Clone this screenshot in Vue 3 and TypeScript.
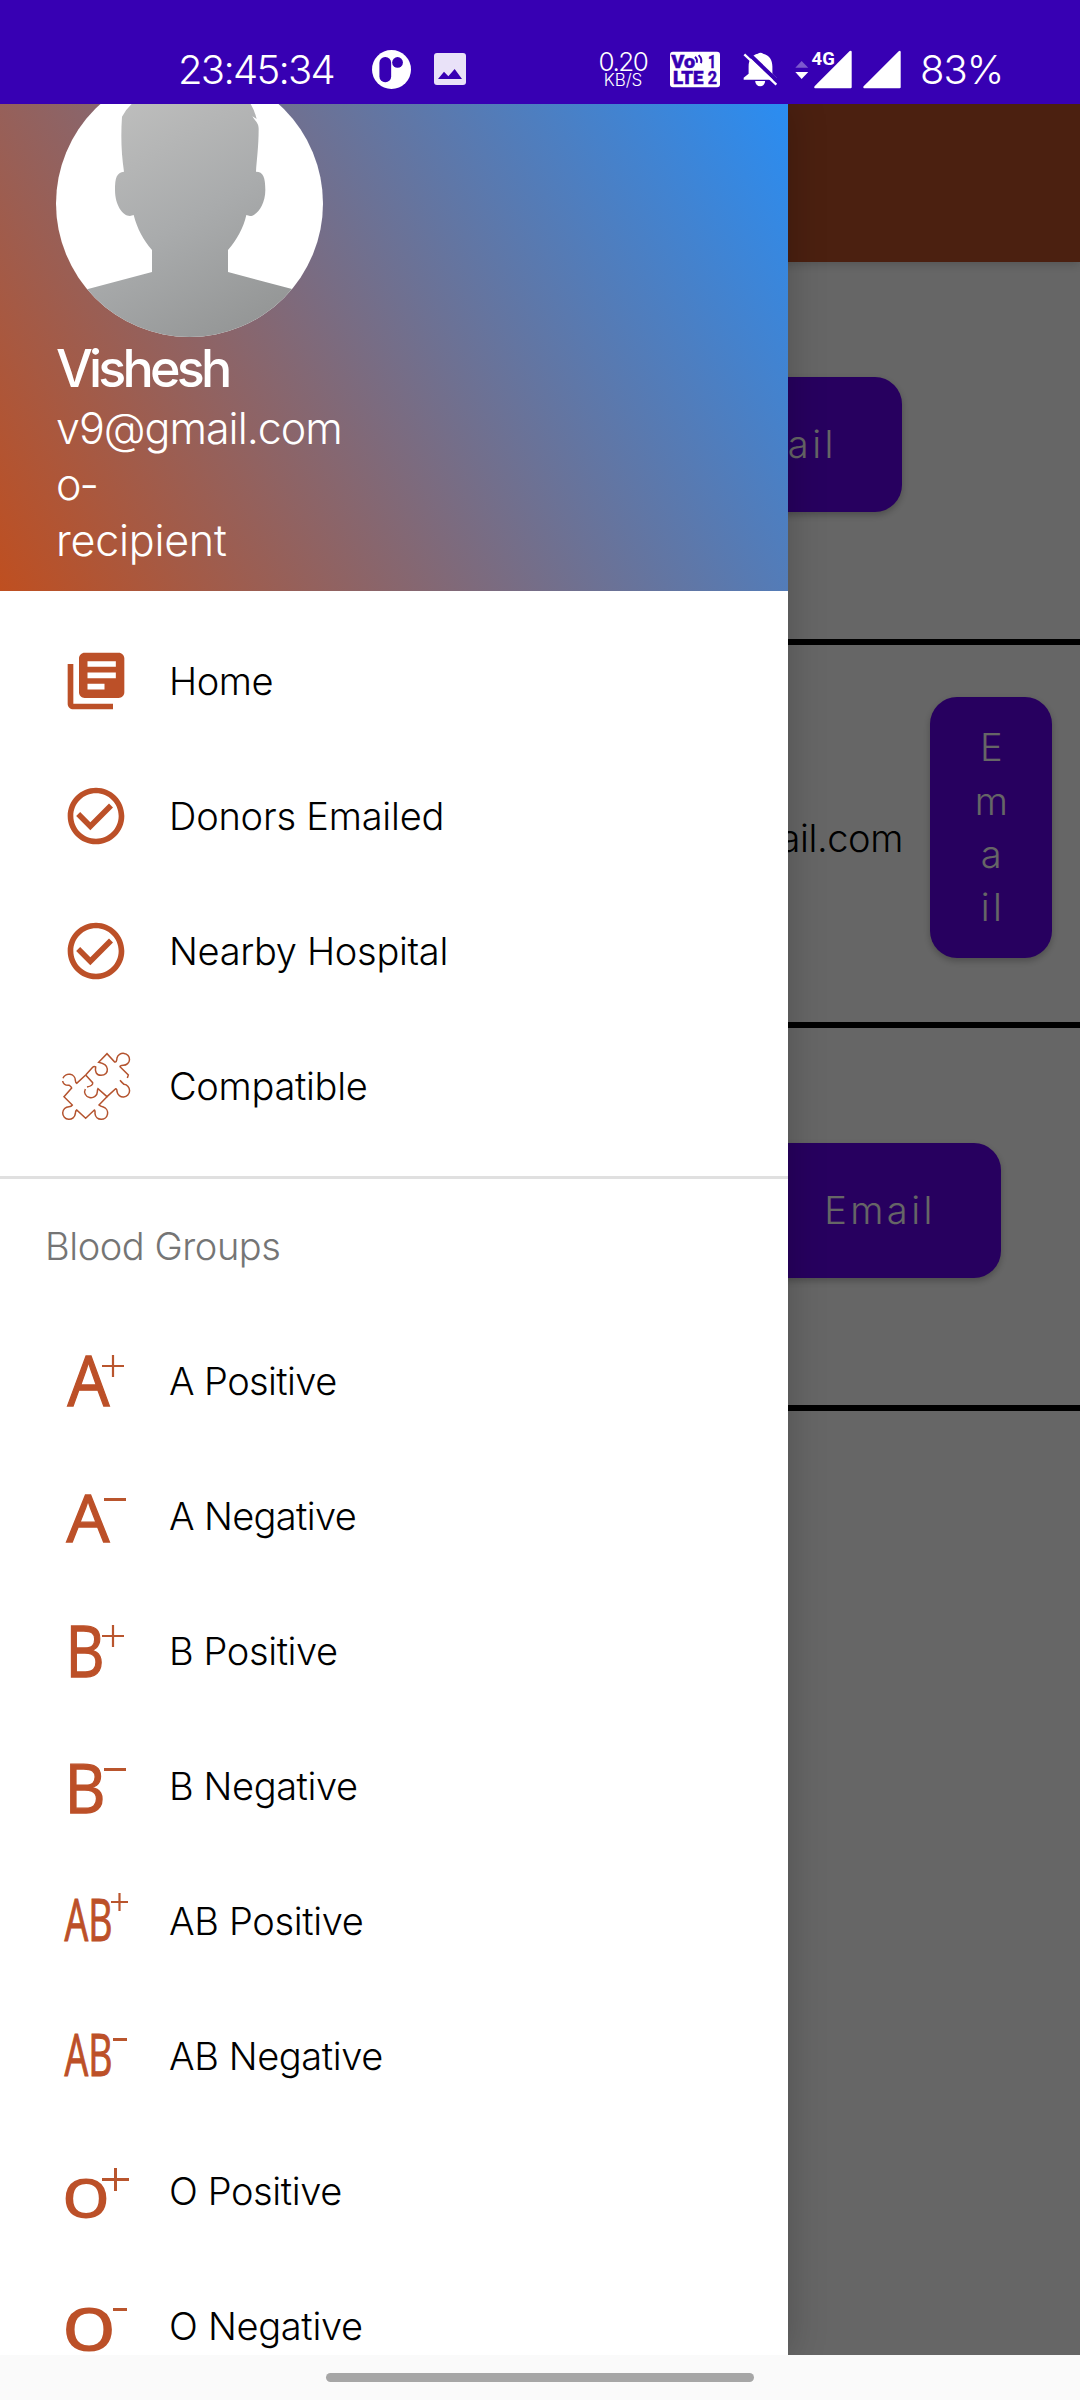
<script setup lang="ts">
interface NavItem {
  label: string
  icon: 'library' | 'check' | 'puzzle'
  spacing: number
}

interface BloodGroup {
  label: string
  spacing: number
  glyph: string
  x: number
  y: number
  size: number
  length: number
  weight: number
  outline: number
  sign: string
  stroke: number
}

const navItems: NavItem[] = [
  { label: 'Home', icon: 'library', spacing: -0.4 },
  { label: 'Donors Emailed', icon: 'check', spacing: -0.2 },
  { label: 'Nearby Hospital', icon: 'check', spacing: -0.3 },
  { label: 'Compatible', icon: 'puzzle', spacing: -0.3 },
]

const bloodGroups: BloodGroup[] = [
  { label: 'A Positive', spacing: -0.6, glyph: 'A', x: 5.5, y: 57.5, size: 70, length: 42, weight: 400, outline: 1.3, sign: 'M40 18H62M51 7V29', stroke: 2.2 },
  { label: 'A Negative', spacing: -0.65, glyph: 'A', x: 4.5, y: 58.5, size: 66, length: 43, weight: 400, outline: 1.3, sign: 'M42 16.5H64', stroke: 3 },
  { label: 'B Positive', spacing: -0.4, glyph: 'B', x: 3.5, y: 58.5, size: 71, length: 39, weight: 400, outline: 1.3, sign: 'M40 18H62M51 7V29', stroke: 2.2 },
  { label: 'B Negative', spacing: -0.4, glyph: 'B', x: 2.5, y: 59.5, size: 67, length: 41, weight: 400, outline: 1.3, sign: 'M42 16.5H64', stroke: 3 },
  { label: 'AB Positive', spacing: -0.35, glyph: 'AB', x: 2.5, y: 53, size: 58, length: 48, weight: 400, outline: 1, sign: 'M49 14H66M57.5 5V23', stroke: 2.2 },
  { label: 'AB Negative', spacing: -0.4, glyph: 'AB', x: 2.5, y: 53, size: 58, length: 48, weight: 400, outline: 1, sign: 'M51 16.5H65', stroke: 3 },
  { label: 'O Positive', spacing: -0.4, glyph: 'O', x: 0, y: 59.5, size: 55, length: 48, weight: 600, outline: 0, sign: 'M40 21.5H67M53.5 10V33', stroke: 3 },
  { label: 'O Negative', spacing: -0.3, glyph: 'O', x: 0, y: 57.5, size: 59, length: 54, weight: 600, outline: 0, sign: 'M51 16.5H65', stroke: 3 },
]
</script>

<template>
  <div class="screen">
    <header class="status">
      <span class="clock">23:45:34</span>
      <svg class="ic-app" viewBox="665 59 116 116">
        <circle cx="723" cy="117" r="58" fill="#fff" />
        <rect x="687" y="80" width="35" height="75" rx="17" fill="#3700b3" />
        <circle cx="741" cy="96" r="16" fill="#3700b3" />
      </svg>
      <svg class="ic-image" viewBox="852 69 96 96">
        <rect x="852" y="69" width="96" height="96" rx="9" fill="#e9e2f8" />
        <path d="M864 147L882 125L895 139L914 117L936 147Z" fill="#3700b3" />
      </svg>
      <div class="net">
        <span class="net-num">0.20</span>
        <span class="net-unit">KB/S</span>
      </div>
      <svg class="ic-volte" viewBox="270 62 150 110">
        <rect x="270" y="64" width="150" height="106" rx="9" fill="#fff" />
        <g fill="#3700b3" stroke="#3700b3" stroke-width="1.5" font-family="Roboto, sans-serif" font-weight="900">
          <text x="274" y="112" font-size="53" textLength="71" lengthAdjust="spacingAndGlyphs">Vo</text>
          <text x="279" y="160" font-size="53" textLength="91" lengthAdjust="spacingAndGlyphs">LTE</text>
          <text x="384" y="112" font-size="53" font-weight="700" textLength="24" lengthAdjust="spacingAndGlyphs">1</text>
          <text x="383" y="160" font-size="53" font-weight="700" textLength="28" lengthAdjust="spacingAndGlyphs">2</text>
        </g>
        <path d="M345 79Q353 86 350 97M356 74Q367 85 363 98" fill="none" stroke="#3700b3" stroke-width="6" />
      </svg>
      <svg class="ic-bell" viewBox="489 66 104 106">
        <path d="M490 150V144L505 132V110C505 88 516 74 533 71C537 67 545 67 549 71C568 75 577 90 577 110V132L590 145V150Z" fill="#fff" />
        <path d="M525 154H555A15 16 0 0 1 525 154Z" fill="#fff" />
        <path d="M500 66L602 164" stroke="#3700b3" stroke-width="12" />
        <path d="M492 73L589 165" stroke="#fff" stroke-width="7" />
      </svg>
      <svg class="ic-4g" viewBox="644 58 172 117">
        <path d="M645 111L664 91L684 111Z" fill="#fff" opacity=".35" />
        <path d="M645 124H684L664 145Z" fill="#fff" />
        <path d="M704 173Q700 171 703 167L809 61Q815 58 815 64V170Q815 173 812 173Z" fill="#fff" />
        <text x="694" y="102" font-size="53" font-weight="700" font-family="Roboto, sans-serif" fill="#fff" textLength="70" lengthAdjust="spacingAndGlyphs">4G</text>
      </svg>
      <svg class="ic-signal" viewBox="848 58 115 117">
        <path d="M851 173Q847 171 850 167L956 61Q962 58 962 64V170Q962 173 959 173Z" fill="#fff" />
      </svg>
      <span class="battery">83%</span>
    </header>

    <div class="body">
      <main class="page">
        <div class="appbar"></div>
        <section class="donor first"><button class="email-btn">Email</button></section>
        <section class="donor second">
          <span class="address">v9@gmail.com</span>
          <button class="email-btn narrow">
            <span>E</span><span>m</span><span>a</span><span>il</span>
          </button>
        </section>
        <section class="donor third"><button class="email-btn">Email</button></section>
      </main>
      <div class="scrim"></div>

      <aside class="drawer">
        <div class="profile">
          <svg class="avatar" viewBox="168 -60 801 801">
            <defs>
              <linearGradient id="skin" gradientUnits="userSpaceOnUse" x1="330" y1="0" x2="740" y2="720">
                <stop offset="0" stop-color="#c0c0bf" />
                <stop offset=".55" stop-color="#a9abac" />
                <stop offset="1" stop-color="#949696" />
              </linearGradient>
              <clipPath id="round"><circle cx="568.5" cy="340.5" r="400.5" /></clipPath>
            </defs>
            <g clip-path="url(#round)">
              <rect x="168" y="-60" width="801" height="801" fill="#fff" />
              <path
                fill="url(#skin)"
                d="M366 80Q376 60 395 42L430 -20H720L752 42Q764 62 770 87L757 79C766 94 776 99 776 116C776 170 770 210 768 245C790 245 796 262 796 300C796 345 770 378 750 378L739 375C730 415 710 450 684 480V546L876 597L969 622V760H168V622L264 597L456 546V480C430 450 412 418 401 375L390 378C368 378 345 345 345 300C345 262 350 248 372 245C364 190 362 140 366 80Z"
              />
            </g>
          </svg>
          <div class="name">Vishesh</div>
          <div class="detail mail">v9@gmail.com</div>
          <div class="detail group">o-</div>
          <div class="detail role">recipient</div>
        </div>

        <nav class="menu">
          <a v-for="item in navItems" :key="item.label" class="row">
            <svg v-if="item.icon === 'library'" class="icon" viewBox="0 0 24 24">
              <path d="M4 6H2v14c0 1.1.9 2 2 2h14v-2H4V6zm16-4H8c-1.100 0-2 .9-2 2v12c0 1.100.9 2 2 2h12c1.100 0 2-.9 2-2V4c0-1.100-.9-2-2-2zm-1 9H9V9h10v2zm-4 4H9v-2h6v2zm4-8H9V5h10v2z" />
            </svg>
            <svg v-else-if="item.icon === 'check'" class="icon" viewBox="0 0 24 24">
              <path d="M16.590 7.580L10 14.170l-3.590-3.580L5 12l5 5 8-8zM12 2C6.480 2 2 6.480 2 12s4.480 10 10 10 10-4.480 10-10S17.520 2 12 2zm0 18c-4.420 0-8-3.580-8-8s3.580-8 8-8 8 3.580 8 8-3.580 8-8 8z" />
            </svg>
            <svg v-else class="icon outline" viewBox="66 456 204 204">
              <path d="M137 525L158 502Q162 498 167 501C164 514 169 526 183 526C196 526 203 517 202 507C201 494 190 490 176 487L201 461L224 486Q230 488 231 474A19 18 0 1 1 250 496Q240 497 240 500L265 525L262 534" />
              <path d="M240 541Q244 546 252 553A19 19 0 1 1 231 575Q231 566 227 566L201 590L174 566Q172 570 172 575A19 18 0 1 1 136 567M141 561Q160 557 158 548L137 525" />
              <path d="M137 525L110 550Q107 549 106 541A19 18 0 0 0 69 535M68 543Q70 557 88 556Q94 559 95 564L72 590L97 615Q94 620 87 620A19 19 0 1 0 106 641Q106 632 110 630L137 655L163 630Q166 631 165 641A19 19 0 1 0 190 621Q181 619 177 615L201 590" />
            </svg>
            <span class="label" :style="{ letterSpacing: item.spacing + 'px' }">{{ item.label }}</span>
          </a>
        </nav>

        <div class="subheader">Blood Groups</div>
        <nav class="groups">
          <a v-for="g in bloodGroups" :key="g.label" class="row">
            <svg class="icon" viewBox="0 0 68 68">
              <text
                :x="g.x"
                :y="g.y"
                :font-size="g.size"
                :font-weight="g.weight"
                :textLength="g.length"
                :stroke-width="g.outline"
                stroke="#bc5028"
                lengthAdjust="spacingAndGlyphs"
                font-family="'Open Sans', 'Noto Sans', sans-serif"
              >{{ g.glyph }}</text>
              <path :d="g.sign" fill="none" stroke="#b9552d" :stroke-width="g.stroke" />
            </svg>
            <span class="label" :style="{ letterSpacing: g.spacing + 'px' }">{{ g.label }}</span>
          </a>
        </nav>
      </aside>
    </div>

    <footer class="gesture"><div class="pill"></div></footer>
  </div>
</template>

<style>
body {
  margin: 0;
}
</style>

<style scoped>
.screen {
  display: flex;
  flex-direction: column;
  width: 1080px;
  height: 2400px;
  overflow: hidden;
  font-family: Inter, 'Liberation Sans', sans-serif;
  font-weight: 300;
  color: #000;
}
.screen svg {
  display: block;
  flex: none;
}
.status {
  flex: none;
  display: flex;
  align-items: center;
  height: 104px;
  padding: 34px 0 0 178px;
  box-sizing: border-box;
  background: #3700b3;
  color: #fff;
  white-space: nowrap;
}
.clock {
  width: 161px;
  font-size: 40px;
  letter-spacing: -1.7px;
}
.ic-app {
  width: 39px;
  height: 39px;
  margin-left: 33px;
}
.ic-image {
  width: 32px;
  height: 32px;
  margin-left: 23px;
}
.net {
  display: flex;
  flex-direction: column;
  align-items: center;
  width: 60px;
  margin-left: 127px;
}
.net-num {
  font-size: 26px;
  line-height: 21px;
  letter-spacing: -1.5px;
}
.net-unit {
  font-size: 17px;
  line-height: 16px;
}
.ic-volte {
  width: 50px;
  height: 37px;
  margin-left: 17px;
}
.ic-bell {
  width: 35px;
  height: 35px;
  margin-left: 23px;
}
.ic-4g {
  width: 57px;
  height: 39px;
  margin-left: 17px;
}
.ic-signal {
  width: 38px;
  height: 39px;
  margin-left: 11px;
}
.battery {
  margin-left: 19px;
  font-size: 40px;
  letter-spacing: -1px;
}
.body {
  position: relative;
  flex: none;
  height: 2251px;
  overflow: hidden;
  background: #fff;
}
.appbar {
  position: relative;
  height: 158px;
  background: #bc5028;
  box-shadow: 0 2px 10px rgba(0, 0, 0, 0.2);
}
.donor {
  display: flex;
  justify-content: flex-end;
  align-items: center;
  height: 383px;
  box-sizing: border-box;
  padding-bottom: 12px;
  border-bottom: 6px solid #000;
}
.first {
  padding-right: 178px;
}
.second {
  padding-right: 28px;
}
.third {
  padding-right: 79px;
}
.email-btn {
  width: 241px;
  height: 135px;
  border: 0;
  border-radius: 27px;
  padding: 0 1px 2px 0;
  background: #6200ee;
  color: #fff;
  font: inherit;
  font-size: 38px;
  letter-spacing: 3.4px;
  box-shadow: 0 3px 7px rgba(0, 0, 0, 0.25);
}
.narrow {
  display: flex;
  flex-direction: column;
  align-items: center;
  justify-content: center;
  width: 122px;
  height: 261px;
  padding: 1px 0 0 4px;
  line-height: 53.3px;
}
.address {
  margin: 21px 27px 0 0;
  font-size: 38px;
  letter-spacing: -0.4px;
}
.scrim {
  position: absolute;
  inset: 0;
  background: rgba(0, 0, 0, 0.6);
}
.drawer {
  position: absolute;
  top: 0;
  bottom: 0;
  left: 0;
  width: 788px;
  background: #fff;
  box-shadow: 0 0 36px rgba(0, 0, 0, 0.22);
}
.profile {
  height: 487px;
  box-sizing: border-box;
  padding-left: 56px;
  overflow: hidden;
  background: linear-gradient(58.3deg, #bf4f20, #2a8df2);
  color: #fff;
}
.avatar {
  width: 267px;
  height: 267px;
  margin-top: -34px;
}
.name {
  margin-top: 3px;
  font-size: 52px;
  font-weight: 500;
  line-height: 57px;
  letter-spacing: -3.8px;
}
.detail {
  font-size: 43px;
  line-height: 56px;
}
.mail {
  margin-top: 3px;
  letter-spacing: -1px;
}
.group {
  letter-spacing: -2px;
}
.role {
  letter-spacing: -0.25px;
}
.menu {
  padding: 22px 0 23px;
  border-bottom: 3px solid #e0e0e0;
}
.row {
  display: flex;
  align-items: center;
  gap: 39px;
  height: 135px;
  padding-left: 62px;
}
.icon {
  width: 68px;
  height: 68px;
  fill: #bc5028;
  overflow: visible;
}
.outline {
  fill: none;
  stroke: #b4532e;
  stroke-width: 4.5;
}
.label {
  font-size: 38px;
  white-space: nowrap;
}
.groups .label {
  padding-bottom: 2px;
}
.subheader {
  height: 135px;
  padding-left: 45px;
  font-size: 38px;
  line-height: 135px;
  letter-spacing: -0.45px;
  color: #757575;
}
.gesture {
  display: flex;
  justify-content: center;
  height: 45px;
  box-sizing: border-box;
  padding-top: 18px;
  background: #fafafa;
}
.pill {
  width: 428px;
  height: 9px;
  border-radius: 5px;
  background: #a6a6a6;
}
</style>
